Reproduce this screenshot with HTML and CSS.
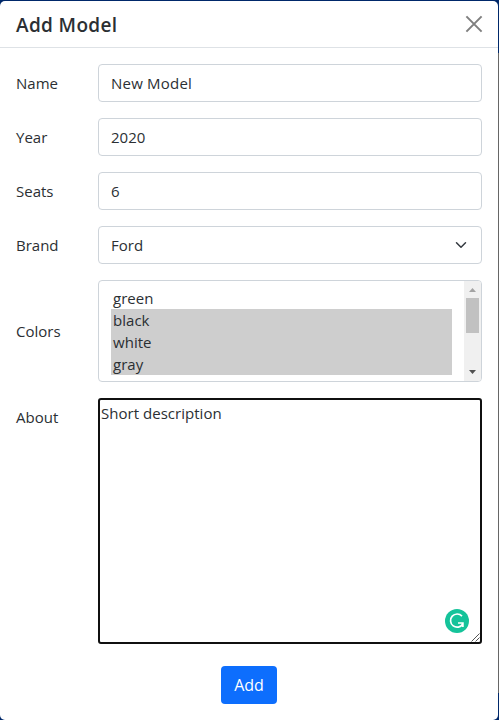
FILE: index.html
```html
<!DOCTYPE html>
<html lang="en">
<head>
<meta charset="utf-8">
<title>Add Model</title>
<link rel="stylesheet" href="styles.css">
</head>
<body>
<main class="modal">
  <header class="header">
    <h1 class="title">Add Model</h1>
    <svg class="close" viewBox="0 0 16 16" width="16" height="16"><path d="M.4.4 15.6 15.6M15.6.4.4 15.6"/></svg>
  </header>
  <form class="form">
    <div class="row"><div class="label">Name</div><div class="control wide">New Model</div></div>
    <div class="row"><div class="label">Year</div><div class="control">2020</div></div>
    <div class="row"><div class="label">Seats</div><div class="control">6</div></div>
    <div class="row"><div class="label">Brand</div>
      <div class="control select">Ford
        <svg viewBox="0 0 16 16" width="12" height="12"><path d="m2 5 6 6 6-6"/></svg>
      </div>
    </div>
    <div class="row"><div class="label">Colors</div>
      <div class="listbox">
        <div class="options">
          <div class="option">green</div>
          <div class="option selected">black</div>
          <div class="option selected">white</div>
          <div class="option selected">gray</div>
        </div>
        <div class="scrollbar">
          <svg class="up" viewBox="0 0 7 4" width="7" height="4"><path d="M0 4 3.5 0 7 4z"/></svg>
          <div class="thumb"></div>
          <svg class="down" viewBox="0 0 7 4" width="7" height="4"><path d="M0 0h7L3.5 4z"/></svg>
        </div>
      </div>
    </div>
    <div class="row about"><div class="label">About</div>
      <div class="textarea">Short description
        <svg class="assistant" viewBox="0 0 24 24" width="24" height="24">
          <circle class="disc" cx="12" cy="12" r="12"/>
          <path class="ring" d="M17 7.1A6.6 6.6 0 1 0 17.8 15M13 14h4.9v4"/>
        </svg>
        <svg class="grip" viewBox="0 0 9 9" width="9" height="9"><path d="M.5 8.5l8-8M4.5 8.5l4-4"/></svg>
      </div>
    </div>
    <div class="actions"><button class="add" type="button">Add</button></div>
  </form>
</main>
</body>
</html>
```
FILE: styles.css
```css
* { box-sizing: border-box; }
body {
  margin: 0;
  height: 720px;
  padding: 1px 1px 0 0;
  overflow: hidden;
  background: linear-gradient(#00286a 53px, #666 53px, #666 693px, #00286a 693px);
  color: #2b2f33;
  font: 15px/24px "Open Sans", "Noto Sans", sans-serif;
  letter-spacing: 0.03px;
}
.modal { height: 719px; background: #fff; border-radius: 5px; }
.header {
  height: 47px;
  padding: 0 16px;
  display: flex;
  align-items: center;
  justify-content: space-between;
  border-bottom: 1px solid #dee2e6;
}
.title { margin: 1px 0 0; font-size: 19px; line-height: 30px; font-weight: 600; letter-spacing: 0.35px; }
.close { fill: none; stroke: #7f7f7f; stroke-width: 2; overflow: visible; }
.form { padding: 16px 16px 0; display: flex; flex-direction: column; gap: 16px; }
.row { display: grid; grid-template-columns: 82px 1fr; align-items: center; }
.label { letter-spacing: 0; }
.control {
  height: 38px;
  padding: 6px 12px;
  border: 1px solid #ced4da;
  border-radius: 4px;
}
.wide { letter-spacing: 0.22px; }
.select { padding-right: 14px; display: flex; align-items: center; justify-content: space-between; }
.select svg { fill: none; stroke: #343a40; stroke-width: 2; stroke-linecap: round; stroke-linejoin: round; }
.listbox {
  height: 102px;
  display: flex;
  border: 1px solid #ced4da;
  border-radius: 4px;
  overflow: hidden;
}
.options { flex: 1; padding: 6px 12px; }
.option { height: 22px; line-height: 23px; padding-left: 2px; }
.selected { background: #cecece; }
.scrollbar { width: 17px; background: #f0f0f0; display: flex; flex-direction: column; align-items: center; }
.up { margin: 7px 0 6px; fill: #a3a3a3; }
.thumb { width: 13px; height: 35px; background: #c1c1c1; }
.down { margin: auto 0 7px; fill: #505050; }
.about { align-items: start; }
.about .label { padding-top: 7px; }
.textarea {
  position: relative;
  height: 246px;
  padding: 1px;
  border: 2px solid #101010;
  border-radius: 3px;
}
.assistant { position: absolute; right: 11px; bottom: 9px; }
.disc { fill: #15c39a; }
.ring { fill: none; stroke: #fff; stroke-width: 1.7; }
.grip { position: absolute; right: 0; bottom: 0; fill: none; stroke: #555; stroke-width: 1; }
.actions { display: flex; justify-content: center; padding-top: 6px; }
.add {
  width: 56px;
  height: 38px;
  padding: 0;
  border: 0;
  border-radius: 4px;
  background: #0d6efd;
  color: #fff;
  font: inherit;
  font-size: 16px;
}
```
